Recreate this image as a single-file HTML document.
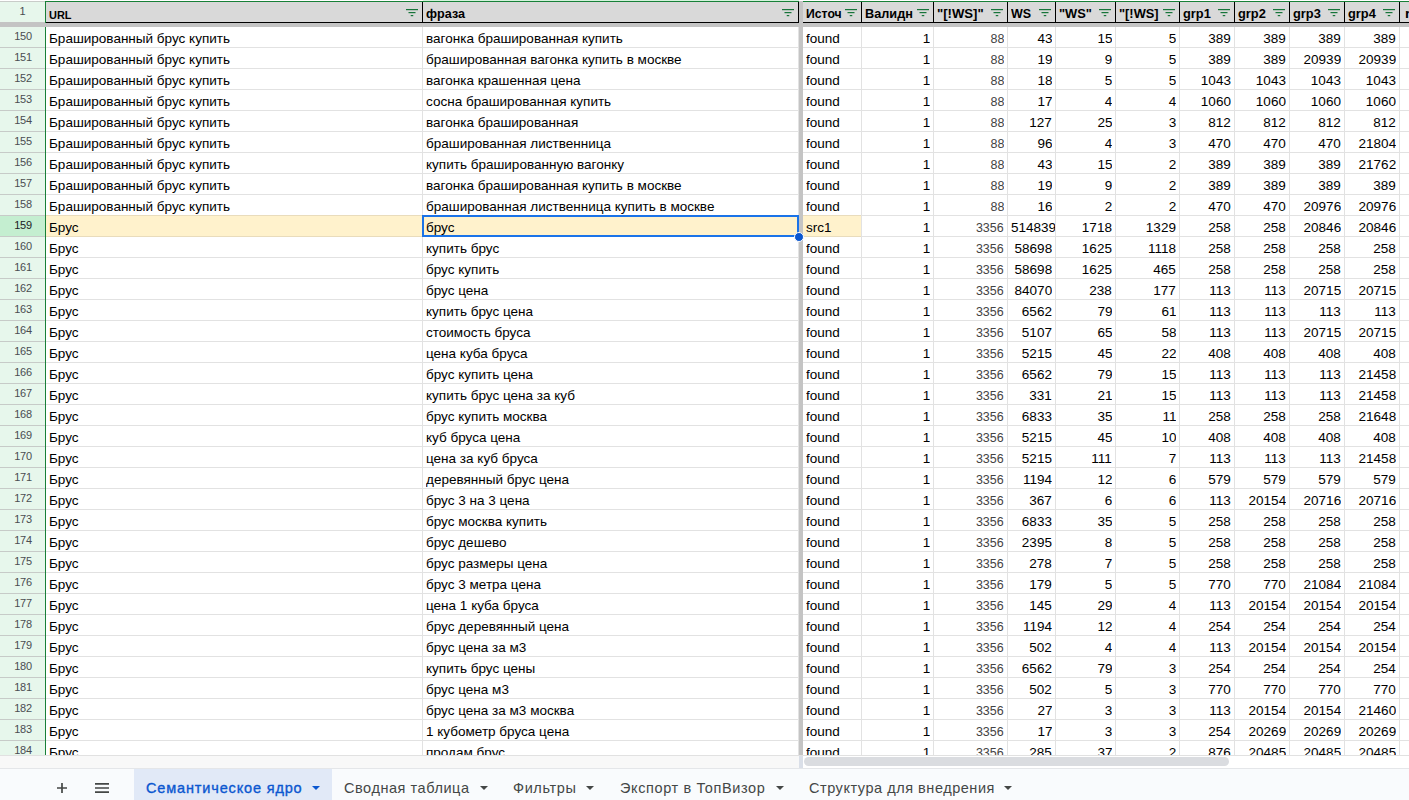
<!DOCTYPE html>
<html lang="ru"><head><meta charset="utf-8"><title>Семантическое ядро</title>
<style>
html,body{margin:0;padding:0;background:#fff;}
body{width:1409px;height:800px;overflow:hidden;position:relative;font-family:"Liberation Sans",sans-serif;}
.a{position:absolute;}
#grid{position:absolute;left:0;top:0;width:1409px;height:755px;overflow:hidden;background:#fff;}
.rh{position:absolute;left:0;width:45px;height:20px;background:#e7f7ec;border-bottom:1px solid #c7cbc8;color:#4a4d51;font-size:11px;line-height:19px;text-align:center;letter-spacing:-0.35px;box-sizing:border-box;padding-left:1px;height:21px;}
.rh.sel{background:#c4eed0;color:#202124;}
.c{position:absolute;height:20px;line-height:21px;font-size:13.0px;color:#000;white-space:nowrap;overflow:hidden;}
.c span{display:inline-block;transform:scaleX(1.04);transform-origin:0 50%;position:relative;top:1px;}
.c.r{text-align:right;}
.c.r span{transform-origin:100% 50%;}
.c.g{color:#434343;font-size:12px;}
.c.g span{top:1.5px;}
.hl{position:absolute;background:#fff2cc;}
.vl{position:absolute;width:1px;background:#e2e2e2;}
.hline{position:absolute;height:1px;background:#e2e2e2;}
.hd{position:absolute;top:2px;height:20px;background:#d9d9d9;font-weight:bold;font-size:12.5px;line-height:25px;color:#000;white-space:nowrap;overflow:hidden;}
.hd span{display:inline-block;transform-origin:0 50%;margin-left:3px;}
.fi{position:absolute;top:9px;width:12px;height:8px;}
.tab{position:absolute;top:769px;height:31px;font-size:14.5px;line-height:38px;color:#444746;white-space:nowrap;}
.car{position:absolute;width:0;height:0;border-left:4px solid transparent;border-right:4px solid transparent;border-top:4px solid #444746;top:786px;}
</style></head><body>
<div id="grid">

<div class="a" style="left:0;top:1px;width:45px;height:1px;background:#c9ccc9"></div>
<div class="a" style="left:0;top:2px;width:45px;height:21px;background:#e7f7ec;color:#4a4d51;font-size:11px;line-height:19px;text-align:center">1</div>
<div class="a" style="left:423px;top:0;width:376px;height:1px;background:#d3f3dc"></div>
<div class="a" style="left:45px;top:1px;width:1364px;height:1px;background:#188038"></div>
<div class="a" style="left:0;top:22px;width:1409px;height:5px;background:#c4c4c4"></div>
<div class="hd" style="left:46px;width:376px"><span id="h0" style="transform:scaleX(0.952);font-size:11.5px;position:relative;top:0.6px">URL</span></div>
<div class="a" style="left:422px;top:2px;width:1px;height:20px;background:#000"></div>
<svg class="fi" style="left:406px" viewBox="0 0 12 8"><rect x="0" y="0" width="12" height="1.2" fill="#17753a"/><rect x="2.5" y="3" width="7" height="1.2" fill="#17753a"/><rect x="4.75" y="6" width="2.5" height="1.2" fill="#17753a"/></svg>
<div class="hd" style="left:423px;width:375px"><span id="h1" style="transform:scaleX(1.008)">фраза</span></div>
<div class="a" style="left:798px;top:2px;width:1px;height:20px;background:#000"></div>
<svg class="fi" style="left:782px" viewBox="0 0 12 8"><rect x="0" y="0" width="12" height="1.2" fill="#17753a"/><rect x="2.5" y="3" width="7" height="1.2" fill="#17753a"/><rect x="4.75" y="6" width="2.5" height="1.2" fill="#17753a"/></svg>
<div class="hd" style="left:803px;width:58px"><span id="h2" style="transform:scaleX(0.979)">Источ</span></div>
<div class="a" style="left:861px;top:2px;width:1px;height:20px;background:#000"></div>
<svg class="fi" style="left:845px" viewBox="0 0 12 8"><rect x="0" y="0" width="12" height="1.2" fill="#17753a"/><rect x="2.5" y="3" width="7" height="1.2" fill="#17753a"/><rect x="4.75" y="6" width="2.5" height="1.2" fill="#17753a"/></svg>
<div class="hd" style="left:862px;width:71px"><span id="h3" style="transform:scaleX(1.017)">Валидн</span></div>
<div class="a" style="left:933px;top:2px;width:1px;height:20px;background:#000"></div>
<svg class="fi" style="left:917px" viewBox="0 0 12 8"><rect x="0" y="0" width="12" height="1.2" fill="#17753a"/><rect x="2.5" y="3" width="7" height="1.2" fill="#17753a"/><rect x="4.75" y="6" width="2.5" height="1.2" fill="#17753a"/></svg>
<div class="hd" style="left:934px;width:73px"><span id="h4" style="transform:scaleX(1.050)">&quot;[!WS]&quot;</span></div>
<div class="a" style="left:1007px;top:2px;width:1px;height:20px;background:#000"></div>
<svg class="fi" style="left:991px" viewBox="0 0 12 8"><rect x="0" y="0" width="12" height="1.2" fill="#17753a"/><rect x="2.5" y="3" width="7" height="1.2" fill="#17753a"/><rect x="4.75" y="6" width="2.5" height="1.2" fill="#17753a"/></svg>
<div class="hd" style="left:1008px;width:47px"><span id="h5" style="transform:scaleX(0.998)">WS</span></div>
<div class="a" style="left:1055px;top:2px;width:1px;height:20px;background:#000"></div>
<svg class="fi" style="left:1039px" viewBox="0 0 12 8"><rect x="0" y="0" width="12" height="1.2" fill="#17753a"/><rect x="2.5" y="3" width="7" height="1.2" fill="#17753a"/><rect x="4.75" y="6" width="2.5" height="1.2" fill="#17753a"/></svg>
<div class="hd" style="left:1056px;width:59px"><span id="h6" style="transform:scaleX(1.028)">&quot;WS&quot;</span></div>
<div class="a" style="left:1115px;top:2px;width:1px;height:20px;background:#000"></div>
<svg class="fi" style="left:1099px" viewBox="0 0 12 8"><rect x="0" y="0" width="12" height="1.2" fill="#17753a"/><rect x="2.5" y="3" width="7" height="1.2" fill="#17753a"/><rect x="4.75" y="6" width="2.5" height="1.2" fill="#17753a"/></svg>
<div class="hd" style="left:1116px;width:63px"><span id="h7" style="transform:scaleX(1.027)">&quot;[!WS]</span></div>
<div class="a" style="left:1179px;top:2px;width:1px;height:20px;background:#000"></div>
<svg class="fi" style="left:1163px" viewBox="0 0 12 8"><rect x="0" y="0" width="12" height="1.2" fill="#17753a"/><rect x="2.5" y="3" width="7" height="1.2" fill="#17753a"/><rect x="4.75" y="6" width="2.5" height="1.2" fill="#17753a"/></svg>
<div class="hd" style="left:1180px;width:54px"><span id="h8" style="transform:scaleX(1.026)">grp1</span></div>
<div class="a" style="left:1234px;top:2px;width:1px;height:20px;background:#000"></div>
<svg class="fi" style="left:1218px" viewBox="0 0 12 8"><rect x="0" y="0" width="12" height="1.2" fill="#17753a"/><rect x="2.5" y="3" width="7" height="1.2" fill="#17753a"/><rect x="4.75" y="6" width="2.5" height="1.2" fill="#17753a"/></svg>
<div class="hd" style="left:1235px;width:54px"><span id="h9" style="transform:scaleX(1.026)">grp2</span></div>
<div class="a" style="left:1289px;top:2px;width:1px;height:20px;background:#000"></div>
<svg class="fi" style="left:1273px" viewBox="0 0 12 8"><rect x="0" y="0" width="12" height="1.2" fill="#17753a"/><rect x="2.5" y="3" width="7" height="1.2" fill="#17753a"/><rect x="4.75" y="6" width="2.5" height="1.2" fill="#17753a"/></svg>
<div class="hd" style="left:1290px;width:54px"><span id="h10" style="transform:scaleX(1.026)">grp3</span></div>
<div class="a" style="left:1344px;top:2px;width:1px;height:20px;background:#000"></div>
<svg class="fi" style="left:1328px" viewBox="0 0 12 8"><rect x="0" y="0" width="12" height="1.2" fill="#17753a"/><rect x="2.5" y="3" width="7" height="1.2" fill="#17753a"/><rect x="4.75" y="6" width="2.5" height="1.2" fill="#17753a"/></svg>
<div class="hd" style="left:1345px;width:54px"><span id="h11" style="transform:scaleX(1.026)">grp4</span></div>
<div class="a" style="left:1399px;top:2px;width:1px;height:20px;background:#000"></div>
<svg class="fi" style="left:1383px" viewBox="0 0 12 8"><rect x="0" y="0" width="12" height="1.2" fill="#17753a"/><rect x="2.5" y="3" width="7" height="1.2" fill="#17753a"/><rect x="4.75" y="6" width="2.5" height="1.2" fill="#17753a"/></svg>
<div class="hd" style="left:1400px;width:60px"><span id="h12" style="transform:scaleX(1.128);margin-left:4.5px">r</span></div>
<div class="a" style="left:1460px;top:2px;width:1px;height:20px;background:#000"></div>
<div class="a" style="left:46px;top:22px;width:1363px;height:1px;background:#000"></div>
<div class="hl" style="left:46px;top:215px;width:816px;height:22px;background:#e9dcbc"></div>
<div class="hl" style="left:46px;top:216px;width:815px;height:20px"></div>
<div class="hline" style="left:46px;top:47px;width:1363px"></div>
<div class="hline" style="left:46px;top:68px;width:1363px"></div>
<div class="hline" style="left:46px;top:89px;width:1363px"></div>
<div class="hline" style="left:46px;top:110px;width:1363px"></div>
<div class="hline" style="left:46px;top:131px;width:1363px"></div>
<div class="hline" style="left:46px;top:152px;width:1363px"></div>
<div class="hline" style="left:46px;top:173px;width:1363px"></div>
<div class="hline" style="left:46px;top:194px;width:1363px"></div>
<div class="hline" style="left:862px;top:215px;width:547px"></div>
<div class="hline" style="left:862px;top:236px;width:547px"></div>
<div class="hline" style="left:46px;top:257px;width:1363px"></div>
<div class="hline" style="left:46px;top:278px;width:1363px"></div>
<div class="hline" style="left:46px;top:299px;width:1363px"></div>
<div class="hline" style="left:46px;top:320px;width:1363px"></div>
<div class="hline" style="left:46px;top:341px;width:1363px"></div>
<div class="hline" style="left:46px;top:362px;width:1363px"></div>
<div class="hline" style="left:46px;top:383px;width:1363px"></div>
<div class="hline" style="left:46px;top:404px;width:1363px"></div>
<div class="hline" style="left:46px;top:425px;width:1363px"></div>
<div class="hline" style="left:46px;top:446px;width:1363px"></div>
<div class="hline" style="left:46px;top:467px;width:1363px"></div>
<div class="hline" style="left:46px;top:488px;width:1363px"></div>
<div class="hline" style="left:46px;top:509px;width:1363px"></div>
<div class="hline" style="left:46px;top:530px;width:1363px"></div>
<div class="hline" style="left:46px;top:551px;width:1363px"></div>
<div class="hline" style="left:46px;top:572px;width:1363px"></div>
<div class="hline" style="left:46px;top:593px;width:1363px"></div>
<div class="hline" style="left:46px;top:614px;width:1363px"></div>
<div class="hline" style="left:46px;top:635px;width:1363px"></div>
<div class="hline" style="left:46px;top:656px;width:1363px"></div>
<div class="hline" style="left:46px;top:677px;width:1363px"></div>
<div class="hline" style="left:46px;top:698px;width:1363px"></div>
<div class="hline" style="left:46px;top:719px;width:1363px"></div>
<div class="hline" style="left:46px;top:740px;width:1363px"></div>
<div class="hline" style="left:46px;top:761px;width:1363px"></div>
<div class="vl" style="left:422px;top:27px;height:728px"></div>
<div class="vl" style="left:798px;top:27px;height:728px"></div>
<div class="vl" style="left:861px;top:27px;height:728px"></div>
<div class="vl" style="left:933px;top:27px;height:728px"></div>
<div class="vl" style="left:1007px;top:27px;height:728px"></div>
<div class="vl" style="left:1055px;top:27px;height:728px"></div>
<div class="vl" style="left:1115px;top:27px;height:728px"></div>
<div class="vl" style="left:1179px;top:27px;height:728px"></div>
<div class="vl" style="left:1234px;top:27px;height:728px"></div>
<div class="vl" style="left:1289px;top:27px;height:728px"></div>
<div class="vl" style="left:1344px;top:27px;height:728px"></div>
<div class="vl" style="left:1399px;top:27px;height:728px"></div>
<div class="rh" style="top:27px">150</div>
<div class="c" style="left:49px;top:27px;width:373px"><span>Брашированный брус купить</span></div>
<div class="c" style="left:426px;top:27px;width:372px"><span>вагонка брашированная купить</span></div>
<div class="c" style="left:806px;top:27px;width:55px"><span>found</span></div>
<div class="c r" style="left:862px;top:27px;width:68px"><span>1</span></div>
<div class="c r g" style="left:934px;top:27px;width:70px"><span>88</span></div>
<div class="c r" style="left:1008px;top:27px;width:44px"><span>43</span></div>
<div class="c r" style="left:1056px;top:27px;width:56px"><span>15</span></div>
<div class="c r" style="left:1116px;top:27px;width:60px"><span>5</span></div>
<div class="c r" style="left:1180px;top:27px;width:51px"><span>389</span></div>
<div class="c r" style="left:1235px;top:27px;width:51px"><span>389</span></div>
<div class="c r" style="left:1290px;top:27px;width:51px"><span>389</span></div>
<div class="c r" style="left:1345px;top:27px;width:51px"><span>389</span></div>
<div class="rh" style="top:48px">151</div>
<div class="c" style="left:49px;top:48px;width:373px"><span>Брашированный брус купить</span></div>
<div class="c" style="left:426px;top:48px;width:372px"><span>брашированная вагонка купить в москве</span></div>
<div class="c" style="left:806px;top:48px;width:55px"><span>found</span></div>
<div class="c r" style="left:862px;top:48px;width:68px"><span>1</span></div>
<div class="c r g" style="left:934px;top:48px;width:70px"><span>88</span></div>
<div class="c r" style="left:1008px;top:48px;width:44px"><span>19</span></div>
<div class="c r" style="left:1056px;top:48px;width:56px"><span>9</span></div>
<div class="c r" style="left:1116px;top:48px;width:60px"><span>5</span></div>
<div class="c r" style="left:1180px;top:48px;width:51px"><span>389</span></div>
<div class="c r" style="left:1235px;top:48px;width:51px"><span>389</span></div>
<div class="c r" style="left:1290px;top:48px;width:51px"><span>20939</span></div>
<div class="c r" style="left:1345px;top:48px;width:51px"><span>20939</span></div>
<div class="rh" style="top:69px">152</div>
<div class="c" style="left:49px;top:69px;width:373px"><span>Брашированный брус купить</span></div>
<div class="c" style="left:426px;top:69px;width:372px"><span>вагонка крашенная цена</span></div>
<div class="c" style="left:806px;top:69px;width:55px"><span>found</span></div>
<div class="c r" style="left:862px;top:69px;width:68px"><span>1</span></div>
<div class="c r g" style="left:934px;top:69px;width:70px"><span>88</span></div>
<div class="c r" style="left:1008px;top:69px;width:44px"><span>18</span></div>
<div class="c r" style="left:1056px;top:69px;width:56px"><span>5</span></div>
<div class="c r" style="left:1116px;top:69px;width:60px"><span>5</span></div>
<div class="c r" style="left:1180px;top:69px;width:51px"><span>1043</span></div>
<div class="c r" style="left:1235px;top:69px;width:51px"><span>1043</span></div>
<div class="c r" style="left:1290px;top:69px;width:51px"><span>1043</span></div>
<div class="c r" style="left:1345px;top:69px;width:51px"><span>1043</span></div>
<div class="rh" style="top:90px">153</div>
<div class="c" style="left:49px;top:90px;width:373px"><span>Брашированный брус купить</span></div>
<div class="c" style="left:426px;top:90px;width:372px"><span>сосна брашированная купить</span></div>
<div class="c" style="left:806px;top:90px;width:55px"><span>found</span></div>
<div class="c r" style="left:862px;top:90px;width:68px"><span>1</span></div>
<div class="c r g" style="left:934px;top:90px;width:70px"><span>88</span></div>
<div class="c r" style="left:1008px;top:90px;width:44px"><span>17</span></div>
<div class="c r" style="left:1056px;top:90px;width:56px"><span>4</span></div>
<div class="c r" style="left:1116px;top:90px;width:60px"><span>4</span></div>
<div class="c r" style="left:1180px;top:90px;width:51px"><span>1060</span></div>
<div class="c r" style="left:1235px;top:90px;width:51px"><span>1060</span></div>
<div class="c r" style="left:1290px;top:90px;width:51px"><span>1060</span></div>
<div class="c r" style="left:1345px;top:90px;width:51px"><span>1060</span></div>
<div class="rh" style="top:111px">154</div>
<div class="c" style="left:49px;top:111px;width:373px"><span>Брашированный брус купить</span></div>
<div class="c" style="left:426px;top:111px;width:372px"><span>вагонка брашированная</span></div>
<div class="c" style="left:806px;top:111px;width:55px"><span>found</span></div>
<div class="c r" style="left:862px;top:111px;width:68px"><span>1</span></div>
<div class="c r g" style="left:934px;top:111px;width:70px"><span>88</span></div>
<div class="c r" style="left:1008px;top:111px;width:44px"><span>127</span></div>
<div class="c r" style="left:1056px;top:111px;width:56px"><span>25</span></div>
<div class="c r" style="left:1116px;top:111px;width:60px"><span>3</span></div>
<div class="c r" style="left:1180px;top:111px;width:51px"><span>812</span></div>
<div class="c r" style="left:1235px;top:111px;width:51px"><span>812</span></div>
<div class="c r" style="left:1290px;top:111px;width:51px"><span>812</span></div>
<div class="c r" style="left:1345px;top:111px;width:51px"><span>812</span></div>
<div class="rh" style="top:132px">155</div>
<div class="c" style="left:49px;top:132px;width:373px"><span>Брашированный брус купить</span></div>
<div class="c" style="left:426px;top:132px;width:372px"><span>брашированная лиственница</span></div>
<div class="c" style="left:806px;top:132px;width:55px"><span>found</span></div>
<div class="c r" style="left:862px;top:132px;width:68px"><span>1</span></div>
<div class="c r g" style="left:934px;top:132px;width:70px"><span>88</span></div>
<div class="c r" style="left:1008px;top:132px;width:44px"><span>96</span></div>
<div class="c r" style="left:1056px;top:132px;width:56px"><span>4</span></div>
<div class="c r" style="left:1116px;top:132px;width:60px"><span>3</span></div>
<div class="c r" style="left:1180px;top:132px;width:51px"><span>470</span></div>
<div class="c r" style="left:1235px;top:132px;width:51px"><span>470</span></div>
<div class="c r" style="left:1290px;top:132px;width:51px"><span>470</span></div>
<div class="c r" style="left:1345px;top:132px;width:51px"><span>21804</span></div>
<div class="rh" style="top:153px">156</div>
<div class="c" style="left:49px;top:153px;width:373px"><span>Брашированный брус купить</span></div>
<div class="c" style="left:426px;top:153px;width:372px"><span>купить брашированную вагонку</span></div>
<div class="c" style="left:806px;top:153px;width:55px"><span>found</span></div>
<div class="c r" style="left:862px;top:153px;width:68px"><span>1</span></div>
<div class="c r g" style="left:934px;top:153px;width:70px"><span>88</span></div>
<div class="c r" style="left:1008px;top:153px;width:44px"><span>43</span></div>
<div class="c r" style="left:1056px;top:153px;width:56px"><span>15</span></div>
<div class="c r" style="left:1116px;top:153px;width:60px"><span>2</span></div>
<div class="c r" style="left:1180px;top:153px;width:51px"><span>389</span></div>
<div class="c r" style="left:1235px;top:153px;width:51px"><span>389</span></div>
<div class="c r" style="left:1290px;top:153px;width:51px"><span>389</span></div>
<div class="c r" style="left:1345px;top:153px;width:51px"><span>21762</span></div>
<div class="rh" style="top:174px">157</div>
<div class="c" style="left:49px;top:174px;width:373px"><span>Брашированный брус купить</span></div>
<div class="c" style="left:426px;top:174px;width:372px"><span>вагонка брашированная купить в москве</span></div>
<div class="c" style="left:806px;top:174px;width:55px"><span>found</span></div>
<div class="c r" style="left:862px;top:174px;width:68px"><span>1</span></div>
<div class="c r g" style="left:934px;top:174px;width:70px"><span>88</span></div>
<div class="c r" style="left:1008px;top:174px;width:44px"><span>19</span></div>
<div class="c r" style="left:1056px;top:174px;width:56px"><span>9</span></div>
<div class="c r" style="left:1116px;top:174px;width:60px"><span>2</span></div>
<div class="c r" style="left:1180px;top:174px;width:51px"><span>389</span></div>
<div class="c r" style="left:1235px;top:174px;width:51px"><span>389</span></div>
<div class="c r" style="left:1290px;top:174px;width:51px"><span>389</span></div>
<div class="c r" style="left:1345px;top:174px;width:51px"><span>389</span></div>
<div class="rh" style="top:195px">158</div>
<div class="c" style="left:49px;top:195px;width:373px"><span>Брашированный брус купить</span></div>
<div class="c" style="left:426px;top:195px;width:372px"><span>брашированная лиственница купить в москве</span></div>
<div class="c" style="left:806px;top:195px;width:55px"><span>found</span></div>
<div class="c r" style="left:862px;top:195px;width:68px"><span>1</span></div>
<div class="c r g" style="left:934px;top:195px;width:70px"><span>88</span></div>
<div class="c r" style="left:1008px;top:195px;width:44px"><span>16</span></div>
<div class="c r" style="left:1056px;top:195px;width:56px"><span>2</span></div>
<div class="c r" style="left:1116px;top:195px;width:60px"><span>2</span></div>
<div class="c r" style="left:1180px;top:195px;width:51px"><span>470</span></div>
<div class="c r" style="left:1235px;top:195px;width:51px"><span>470</span></div>
<div class="c r" style="left:1290px;top:195px;width:51px"><span>20976</span></div>
<div class="c r" style="left:1345px;top:195px;width:51px"><span>20976</span></div>
<div class="rh sel" style="top:216px">159</div>
<div class="c" style="left:49px;top:216px;width:373px"><span>Брус</span></div>
<div class="c" style="left:426px;top:216px;width:372px"><span>брус</span></div>
<div class="c" style="left:806px;top:216px;width:55px"><span>src1</span></div>
<div class="c r" style="left:862px;top:216px;width:68px"><span>1</span></div>
<div class="c r g" style="left:934px;top:216px;width:70px"><span>3356</span></div>
<div class="c" style="left:1011px;top:216px;width:44px"><span>514839</span></div>
<div class="c r" style="left:1056px;top:216px;width:56px"><span>1718</span></div>
<div class="c r" style="left:1116px;top:216px;width:60px"><span>1329</span></div>
<div class="c r" style="left:1180px;top:216px;width:51px"><span>258</span></div>
<div class="c r" style="left:1235px;top:216px;width:51px"><span>258</span></div>
<div class="c r" style="left:1290px;top:216px;width:51px"><span>20846</span></div>
<div class="c r" style="left:1345px;top:216px;width:51px"><span>20846</span></div>
<div class="rh" style="top:237px">160</div>
<div class="c" style="left:49px;top:237px;width:373px"><span>Брус</span></div>
<div class="c" style="left:426px;top:237px;width:372px"><span>купить брус</span></div>
<div class="c" style="left:806px;top:237px;width:55px"><span>found</span></div>
<div class="c r" style="left:862px;top:237px;width:68px"><span>1</span></div>
<div class="c r g" style="left:934px;top:237px;width:70px"><span>3356</span></div>
<div class="c r" style="left:1008px;top:237px;width:44px"><span>58698</span></div>
<div class="c r" style="left:1056px;top:237px;width:56px"><span>1625</span></div>
<div class="c r" style="left:1116px;top:237px;width:60px"><span>1118</span></div>
<div class="c r" style="left:1180px;top:237px;width:51px"><span>258</span></div>
<div class="c r" style="left:1235px;top:237px;width:51px"><span>258</span></div>
<div class="c r" style="left:1290px;top:237px;width:51px"><span>258</span></div>
<div class="c r" style="left:1345px;top:237px;width:51px"><span>258</span></div>
<div class="rh" style="top:258px">161</div>
<div class="c" style="left:49px;top:258px;width:373px"><span>Брус</span></div>
<div class="c" style="left:426px;top:258px;width:372px"><span>брус купить</span></div>
<div class="c" style="left:806px;top:258px;width:55px"><span>found</span></div>
<div class="c r" style="left:862px;top:258px;width:68px"><span>1</span></div>
<div class="c r g" style="left:934px;top:258px;width:70px"><span>3356</span></div>
<div class="c r" style="left:1008px;top:258px;width:44px"><span>58698</span></div>
<div class="c r" style="left:1056px;top:258px;width:56px"><span>1625</span></div>
<div class="c r" style="left:1116px;top:258px;width:60px"><span>465</span></div>
<div class="c r" style="left:1180px;top:258px;width:51px"><span>258</span></div>
<div class="c r" style="left:1235px;top:258px;width:51px"><span>258</span></div>
<div class="c r" style="left:1290px;top:258px;width:51px"><span>258</span></div>
<div class="c r" style="left:1345px;top:258px;width:51px"><span>258</span></div>
<div class="rh" style="top:279px">162</div>
<div class="c" style="left:49px;top:279px;width:373px"><span>Брус</span></div>
<div class="c" style="left:426px;top:279px;width:372px"><span>брус цена</span></div>
<div class="c" style="left:806px;top:279px;width:55px"><span>found</span></div>
<div class="c r" style="left:862px;top:279px;width:68px"><span>1</span></div>
<div class="c r g" style="left:934px;top:279px;width:70px"><span>3356</span></div>
<div class="c r" style="left:1008px;top:279px;width:44px"><span>84070</span></div>
<div class="c r" style="left:1056px;top:279px;width:56px"><span>238</span></div>
<div class="c r" style="left:1116px;top:279px;width:60px"><span>177</span></div>
<div class="c r" style="left:1180px;top:279px;width:51px"><span>113</span></div>
<div class="c r" style="left:1235px;top:279px;width:51px"><span>113</span></div>
<div class="c r" style="left:1290px;top:279px;width:51px"><span>20715</span></div>
<div class="c r" style="left:1345px;top:279px;width:51px"><span>20715</span></div>
<div class="rh" style="top:300px">163</div>
<div class="c" style="left:49px;top:300px;width:373px"><span>Брус</span></div>
<div class="c" style="left:426px;top:300px;width:372px"><span>купить брус цена</span></div>
<div class="c" style="left:806px;top:300px;width:55px"><span>found</span></div>
<div class="c r" style="left:862px;top:300px;width:68px"><span>1</span></div>
<div class="c r g" style="left:934px;top:300px;width:70px"><span>3356</span></div>
<div class="c r" style="left:1008px;top:300px;width:44px"><span>6562</span></div>
<div class="c r" style="left:1056px;top:300px;width:56px"><span>79</span></div>
<div class="c r" style="left:1116px;top:300px;width:60px"><span>61</span></div>
<div class="c r" style="left:1180px;top:300px;width:51px"><span>113</span></div>
<div class="c r" style="left:1235px;top:300px;width:51px"><span>113</span></div>
<div class="c r" style="left:1290px;top:300px;width:51px"><span>113</span></div>
<div class="c r" style="left:1345px;top:300px;width:51px"><span>113</span></div>
<div class="rh" style="top:321px">164</div>
<div class="c" style="left:49px;top:321px;width:373px"><span>Брус</span></div>
<div class="c" style="left:426px;top:321px;width:372px"><span>стоимость бруса</span></div>
<div class="c" style="left:806px;top:321px;width:55px"><span>found</span></div>
<div class="c r" style="left:862px;top:321px;width:68px"><span>1</span></div>
<div class="c r g" style="left:934px;top:321px;width:70px"><span>3356</span></div>
<div class="c r" style="left:1008px;top:321px;width:44px"><span>5107</span></div>
<div class="c r" style="left:1056px;top:321px;width:56px"><span>65</span></div>
<div class="c r" style="left:1116px;top:321px;width:60px"><span>58</span></div>
<div class="c r" style="left:1180px;top:321px;width:51px"><span>113</span></div>
<div class="c r" style="left:1235px;top:321px;width:51px"><span>113</span></div>
<div class="c r" style="left:1290px;top:321px;width:51px"><span>20715</span></div>
<div class="c r" style="left:1345px;top:321px;width:51px"><span>20715</span></div>
<div class="rh" style="top:342px">165</div>
<div class="c" style="left:49px;top:342px;width:373px"><span>Брус</span></div>
<div class="c" style="left:426px;top:342px;width:372px"><span>цена куба бруса</span></div>
<div class="c" style="left:806px;top:342px;width:55px"><span>found</span></div>
<div class="c r" style="left:862px;top:342px;width:68px"><span>1</span></div>
<div class="c r g" style="left:934px;top:342px;width:70px"><span>3356</span></div>
<div class="c r" style="left:1008px;top:342px;width:44px"><span>5215</span></div>
<div class="c r" style="left:1056px;top:342px;width:56px"><span>45</span></div>
<div class="c r" style="left:1116px;top:342px;width:60px"><span>22</span></div>
<div class="c r" style="left:1180px;top:342px;width:51px"><span>408</span></div>
<div class="c r" style="left:1235px;top:342px;width:51px"><span>408</span></div>
<div class="c r" style="left:1290px;top:342px;width:51px"><span>408</span></div>
<div class="c r" style="left:1345px;top:342px;width:51px"><span>408</span></div>
<div class="rh" style="top:363px">166</div>
<div class="c" style="left:49px;top:363px;width:373px"><span>Брус</span></div>
<div class="c" style="left:426px;top:363px;width:372px"><span>брус купить цена</span></div>
<div class="c" style="left:806px;top:363px;width:55px"><span>found</span></div>
<div class="c r" style="left:862px;top:363px;width:68px"><span>1</span></div>
<div class="c r g" style="left:934px;top:363px;width:70px"><span>3356</span></div>
<div class="c r" style="left:1008px;top:363px;width:44px"><span>6562</span></div>
<div class="c r" style="left:1056px;top:363px;width:56px"><span>79</span></div>
<div class="c r" style="left:1116px;top:363px;width:60px"><span>15</span></div>
<div class="c r" style="left:1180px;top:363px;width:51px"><span>113</span></div>
<div class="c r" style="left:1235px;top:363px;width:51px"><span>113</span></div>
<div class="c r" style="left:1290px;top:363px;width:51px"><span>113</span></div>
<div class="c r" style="left:1345px;top:363px;width:51px"><span>21458</span></div>
<div class="rh" style="top:384px">167</div>
<div class="c" style="left:49px;top:384px;width:373px"><span>Брус</span></div>
<div class="c" style="left:426px;top:384px;width:372px"><span>купить брус цена за куб</span></div>
<div class="c" style="left:806px;top:384px;width:55px"><span>found</span></div>
<div class="c r" style="left:862px;top:384px;width:68px"><span>1</span></div>
<div class="c r g" style="left:934px;top:384px;width:70px"><span>3356</span></div>
<div class="c r" style="left:1008px;top:384px;width:44px"><span>331</span></div>
<div class="c r" style="left:1056px;top:384px;width:56px"><span>21</span></div>
<div class="c r" style="left:1116px;top:384px;width:60px"><span>15</span></div>
<div class="c r" style="left:1180px;top:384px;width:51px"><span>113</span></div>
<div class="c r" style="left:1235px;top:384px;width:51px"><span>113</span></div>
<div class="c r" style="left:1290px;top:384px;width:51px"><span>113</span></div>
<div class="c r" style="left:1345px;top:384px;width:51px"><span>21458</span></div>
<div class="rh" style="top:405px">168</div>
<div class="c" style="left:49px;top:405px;width:373px"><span>Брус</span></div>
<div class="c" style="left:426px;top:405px;width:372px"><span>брус купить москва</span></div>
<div class="c" style="left:806px;top:405px;width:55px"><span>found</span></div>
<div class="c r" style="left:862px;top:405px;width:68px"><span>1</span></div>
<div class="c r g" style="left:934px;top:405px;width:70px"><span>3356</span></div>
<div class="c r" style="left:1008px;top:405px;width:44px"><span>6833</span></div>
<div class="c r" style="left:1056px;top:405px;width:56px"><span>35</span></div>
<div class="c r" style="left:1116px;top:405px;width:60px"><span>11</span></div>
<div class="c r" style="left:1180px;top:405px;width:51px"><span>258</span></div>
<div class="c r" style="left:1235px;top:405px;width:51px"><span>258</span></div>
<div class="c r" style="left:1290px;top:405px;width:51px"><span>258</span></div>
<div class="c r" style="left:1345px;top:405px;width:51px"><span>21648</span></div>
<div class="rh" style="top:426px">169</div>
<div class="c" style="left:49px;top:426px;width:373px"><span>Брус</span></div>
<div class="c" style="left:426px;top:426px;width:372px"><span>куб бруса цена</span></div>
<div class="c" style="left:806px;top:426px;width:55px"><span>found</span></div>
<div class="c r" style="left:862px;top:426px;width:68px"><span>1</span></div>
<div class="c r g" style="left:934px;top:426px;width:70px"><span>3356</span></div>
<div class="c r" style="left:1008px;top:426px;width:44px"><span>5215</span></div>
<div class="c r" style="left:1056px;top:426px;width:56px"><span>45</span></div>
<div class="c r" style="left:1116px;top:426px;width:60px"><span>10</span></div>
<div class="c r" style="left:1180px;top:426px;width:51px"><span>408</span></div>
<div class="c r" style="left:1235px;top:426px;width:51px"><span>408</span></div>
<div class="c r" style="left:1290px;top:426px;width:51px"><span>408</span></div>
<div class="c r" style="left:1345px;top:426px;width:51px"><span>408</span></div>
<div class="rh" style="top:447px">170</div>
<div class="c" style="left:49px;top:447px;width:373px"><span>Брус</span></div>
<div class="c" style="left:426px;top:447px;width:372px"><span>цена за куб бруса</span></div>
<div class="c" style="left:806px;top:447px;width:55px"><span>found</span></div>
<div class="c r" style="left:862px;top:447px;width:68px"><span>1</span></div>
<div class="c r g" style="left:934px;top:447px;width:70px"><span>3356</span></div>
<div class="c r" style="left:1008px;top:447px;width:44px"><span>5215</span></div>
<div class="c r" style="left:1056px;top:447px;width:56px"><span>111</span></div>
<div class="c r" style="left:1116px;top:447px;width:60px"><span>7</span></div>
<div class="c r" style="left:1180px;top:447px;width:51px"><span>113</span></div>
<div class="c r" style="left:1235px;top:447px;width:51px"><span>113</span></div>
<div class="c r" style="left:1290px;top:447px;width:51px"><span>113</span></div>
<div class="c r" style="left:1345px;top:447px;width:51px"><span>21458</span></div>
<div class="rh" style="top:468px">171</div>
<div class="c" style="left:49px;top:468px;width:373px"><span>Брус</span></div>
<div class="c" style="left:426px;top:468px;width:372px"><span>деревянный брус цена</span></div>
<div class="c" style="left:806px;top:468px;width:55px"><span>found</span></div>
<div class="c r" style="left:862px;top:468px;width:68px"><span>1</span></div>
<div class="c r g" style="left:934px;top:468px;width:70px"><span>3356</span></div>
<div class="c r" style="left:1008px;top:468px;width:44px"><span>1194</span></div>
<div class="c r" style="left:1056px;top:468px;width:56px"><span>12</span></div>
<div class="c r" style="left:1116px;top:468px;width:60px"><span>6</span></div>
<div class="c r" style="left:1180px;top:468px;width:51px"><span>579</span></div>
<div class="c r" style="left:1235px;top:468px;width:51px"><span>579</span></div>
<div class="c r" style="left:1290px;top:468px;width:51px"><span>579</span></div>
<div class="c r" style="left:1345px;top:468px;width:51px"><span>579</span></div>
<div class="rh" style="top:489px">172</div>
<div class="c" style="left:49px;top:489px;width:373px"><span>Брус</span></div>
<div class="c" style="left:426px;top:489px;width:372px"><span>брус 3 на 3 цена</span></div>
<div class="c" style="left:806px;top:489px;width:55px"><span>found</span></div>
<div class="c r" style="left:862px;top:489px;width:68px"><span>1</span></div>
<div class="c r g" style="left:934px;top:489px;width:70px"><span>3356</span></div>
<div class="c r" style="left:1008px;top:489px;width:44px"><span>367</span></div>
<div class="c r" style="left:1056px;top:489px;width:56px"><span>6</span></div>
<div class="c r" style="left:1116px;top:489px;width:60px"><span>6</span></div>
<div class="c r" style="left:1180px;top:489px;width:51px"><span>113</span></div>
<div class="c r" style="left:1235px;top:489px;width:51px"><span>20154</span></div>
<div class="c r" style="left:1290px;top:489px;width:51px"><span>20716</span></div>
<div class="c r" style="left:1345px;top:489px;width:51px"><span>20716</span></div>
<div class="rh" style="top:510px">173</div>
<div class="c" style="left:49px;top:510px;width:373px"><span>Брус</span></div>
<div class="c" style="left:426px;top:510px;width:372px"><span>брус москва купить</span></div>
<div class="c" style="left:806px;top:510px;width:55px"><span>found</span></div>
<div class="c r" style="left:862px;top:510px;width:68px"><span>1</span></div>
<div class="c r g" style="left:934px;top:510px;width:70px"><span>3356</span></div>
<div class="c r" style="left:1008px;top:510px;width:44px"><span>6833</span></div>
<div class="c r" style="left:1056px;top:510px;width:56px"><span>35</span></div>
<div class="c r" style="left:1116px;top:510px;width:60px"><span>5</span></div>
<div class="c r" style="left:1180px;top:510px;width:51px"><span>258</span></div>
<div class="c r" style="left:1235px;top:510px;width:51px"><span>258</span></div>
<div class="c r" style="left:1290px;top:510px;width:51px"><span>258</span></div>
<div class="c r" style="left:1345px;top:510px;width:51px"><span>258</span></div>
<div class="rh" style="top:531px">174</div>
<div class="c" style="left:49px;top:531px;width:373px"><span>Брус</span></div>
<div class="c" style="left:426px;top:531px;width:372px"><span>брус дешево</span></div>
<div class="c" style="left:806px;top:531px;width:55px"><span>found</span></div>
<div class="c r" style="left:862px;top:531px;width:68px"><span>1</span></div>
<div class="c r g" style="left:934px;top:531px;width:70px"><span>3356</span></div>
<div class="c r" style="left:1008px;top:531px;width:44px"><span>2395</span></div>
<div class="c r" style="left:1056px;top:531px;width:56px"><span>8</span></div>
<div class="c r" style="left:1116px;top:531px;width:60px"><span>5</span></div>
<div class="c r" style="left:1180px;top:531px;width:51px"><span>258</span></div>
<div class="c r" style="left:1235px;top:531px;width:51px"><span>258</span></div>
<div class="c r" style="left:1290px;top:531px;width:51px"><span>258</span></div>
<div class="c r" style="left:1345px;top:531px;width:51px"><span>258</span></div>
<div class="rh" style="top:552px">175</div>
<div class="c" style="left:49px;top:552px;width:373px"><span>Брус</span></div>
<div class="c" style="left:426px;top:552px;width:372px"><span>брус размеры цена</span></div>
<div class="c" style="left:806px;top:552px;width:55px"><span>found</span></div>
<div class="c r" style="left:862px;top:552px;width:68px"><span>1</span></div>
<div class="c r g" style="left:934px;top:552px;width:70px"><span>3356</span></div>
<div class="c r" style="left:1008px;top:552px;width:44px"><span>278</span></div>
<div class="c r" style="left:1056px;top:552px;width:56px"><span>7</span></div>
<div class="c r" style="left:1116px;top:552px;width:60px"><span>5</span></div>
<div class="c r" style="left:1180px;top:552px;width:51px"><span>258</span></div>
<div class="c r" style="left:1235px;top:552px;width:51px"><span>258</span></div>
<div class="c r" style="left:1290px;top:552px;width:51px"><span>258</span></div>
<div class="c r" style="left:1345px;top:552px;width:51px"><span>258</span></div>
<div class="rh" style="top:573px">176</div>
<div class="c" style="left:49px;top:573px;width:373px"><span>Брус</span></div>
<div class="c" style="left:426px;top:573px;width:372px"><span>брус 3 метра цена</span></div>
<div class="c" style="left:806px;top:573px;width:55px"><span>found</span></div>
<div class="c r" style="left:862px;top:573px;width:68px"><span>1</span></div>
<div class="c r g" style="left:934px;top:573px;width:70px"><span>3356</span></div>
<div class="c r" style="left:1008px;top:573px;width:44px"><span>179</span></div>
<div class="c r" style="left:1056px;top:573px;width:56px"><span>5</span></div>
<div class="c r" style="left:1116px;top:573px;width:60px"><span>5</span></div>
<div class="c r" style="left:1180px;top:573px;width:51px"><span>770</span></div>
<div class="c r" style="left:1235px;top:573px;width:51px"><span>770</span></div>
<div class="c r" style="left:1290px;top:573px;width:51px"><span>21084</span></div>
<div class="c r" style="left:1345px;top:573px;width:51px"><span>21084</span></div>
<div class="rh" style="top:594px">177</div>
<div class="c" style="left:49px;top:594px;width:373px"><span>Брус</span></div>
<div class="c" style="left:426px;top:594px;width:372px"><span>цена 1 куба бруса</span></div>
<div class="c" style="left:806px;top:594px;width:55px"><span>found</span></div>
<div class="c r" style="left:862px;top:594px;width:68px"><span>1</span></div>
<div class="c r g" style="left:934px;top:594px;width:70px"><span>3356</span></div>
<div class="c r" style="left:1008px;top:594px;width:44px"><span>145</span></div>
<div class="c r" style="left:1056px;top:594px;width:56px"><span>29</span></div>
<div class="c r" style="left:1116px;top:594px;width:60px"><span>4</span></div>
<div class="c r" style="left:1180px;top:594px;width:51px"><span>113</span></div>
<div class="c r" style="left:1235px;top:594px;width:51px"><span>20154</span></div>
<div class="c r" style="left:1290px;top:594px;width:51px"><span>20154</span></div>
<div class="c r" style="left:1345px;top:594px;width:51px"><span>20154</span></div>
<div class="rh" style="top:615px">178</div>
<div class="c" style="left:49px;top:615px;width:373px"><span>Брус</span></div>
<div class="c" style="left:426px;top:615px;width:372px"><span>брус деревянный цена</span></div>
<div class="c" style="left:806px;top:615px;width:55px"><span>found</span></div>
<div class="c r" style="left:862px;top:615px;width:68px"><span>1</span></div>
<div class="c r g" style="left:934px;top:615px;width:70px"><span>3356</span></div>
<div class="c r" style="left:1008px;top:615px;width:44px"><span>1194</span></div>
<div class="c r" style="left:1056px;top:615px;width:56px"><span>12</span></div>
<div class="c r" style="left:1116px;top:615px;width:60px"><span>4</span></div>
<div class="c r" style="left:1180px;top:615px;width:51px"><span>254</span></div>
<div class="c r" style="left:1235px;top:615px;width:51px"><span>254</span></div>
<div class="c r" style="left:1290px;top:615px;width:51px"><span>254</span></div>
<div class="c r" style="left:1345px;top:615px;width:51px"><span>254</span></div>
<div class="rh" style="top:636px">179</div>
<div class="c" style="left:49px;top:636px;width:373px"><span>Брус</span></div>
<div class="c" style="left:426px;top:636px;width:372px"><span>брус цена за м3</span></div>
<div class="c" style="left:806px;top:636px;width:55px"><span>found</span></div>
<div class="c r" style="left:862px;top:636px;width:68px"><span>1</span></div>
<div class="c r g" style="left:934px;top:636px;width:70px"><span>3356</span></div>
<div class="c r" style="left:1008px;top:636px;width:44px"><span>502</span></div>
<div class="c r" style="left:1056px;top:636px;width:56px"><span>4</span></div>
<div class="c r" style="left:1116px;top:636px;width:60px"><span>4</span></div>
<div class="c r" style="left:1180px;top:636px;width:51px"><span>113</span></div>
<div class="c r" style="left:1235px;top:636px;width:51px"><span>20154</span></div>
<div class="c r" style="left:1290px;top:636px;width:51px"><span>20154</span></div>
<div class="c r" style="left:1345px;top:636px;width:51px"><span>20154</span></div>
<div class="rh" style="top:657px">180</div>
<div class="c" style="left:49px;top:657px;width:373px"><span>Брус</span></div>
<div class="c" style="left:426px;top:657px;width:372px"><span>купить брус цены</span></div>
<div class="c" style="left:806px;top:657px;width:55px"><span>found</span></div>
<div class="c r" style="left:862px;top:657px;width:68px"><span>1</span></div>
<div class="c r g" style="left:934px;top:657px;width:70px"><span>3356</span></div>
<div class="c r" style="left:1008px;top:657px;width:44px"><span>6562</span></div>
<div class="c r" style="left:1056px;top:657px;width:56px"><span>79</span></div>
<div class="c r" style="left:1116px;top:657px;width:60px"><span>3</span></div>
<div class="c r" style="left:1180px;top:657px;width:51px"><span>254</span></div>
<div class="c r" style="left:1235px;top:657px;width:51px"><span>254</span></div>
<div class="c r" style="left:1290px;top:657px;width:51px"><span>254</span></div>
<div class="c r" style="left:1345px;top:657px;width:51px"><span>254</span></div>
<div class="rh" style="top:678px">181</div>
<div class="c" style="left:49px;top:678px;width:373px"><span>Брус</span></div>
<div class="c" style="left:426px;top:678px;width:372px"><span>брус цена м3</span></div>
<div class="c" style="left:806px;top:678px;width:55px"><span>found</span></div>
<div class="c r" style="left:862px;top:678px;width:68px"><span>1</span></div>
<div class="c r g" style="left:934px;top:678px;width:70px"><span>3356</span></div>
<div class="c r" style="left:1008px;top:678px;width:44px"><span>502</span></div>
<div class="c r" style="left:1056px;top:678px;width:56px"><span>5</span></div>
<div class="c r" style="left:1116px;top:678px;width:60px"><span>3</span></div>
<div class="c r" style="left:1180px;top:678px;width:51px"><span>770</span></div>
<div class="c r" style="left:1235px;top:678px;width:51px"><span>770</span></div>
<div class="c r" style="left:1290px;top:678px;width:51px"><span>770</span></div>
<div class="c r" style="left:1345px;top:678px;width:51px"><span>770</span></div>
<div class="rh" style="top:699px">182</div>
<div class="c" style="left:49px;top:699px;width:373px"><span>Брус</span></div>
<div class="c" style="left:426px;top:699px;width:372px"><span>брус цена за м3 москва</span></div>
<div class="c" style="left:806px;top:699px;width:55px"><span>found</span></div>
<div class="c r" style="left:862px;top:699px;width:68px"><span>1</span></div>
<div class="c r g" style="left:934px;top:699px;width:70px"><span>3356</span></div>
<div class="c r" style="left:1008px;top:699px;width:44px"><span>27</span></div>
<div class="c r" style="left:1056px;top:699px;width:56px"><span>3</span></div>
<div class="c r" style="left:1116px;top:699px;width:60px"><span>3</span></div>
<div class="c r" style="left:1180px;top:699px;width:51px"><span>113</span></div>
<div class="c r" style="left:1235px;top:699px;width:51px"><span>20154</span></div>
<div class="c r" style="left:1290px;top:699px;width:51px"><span>20154</span></div>
<div class="c r" style="left:1345px;top:699px;width:51px"><span>21460</span></div>
<div class="rh" style="top:720px">183</div>
<div class="c" style="left:49px;top:720px;width:373px"><span>Брус</span></div>
<div class="c" style="left:426px;top:720px;width:372px"><span>1 кубометр бруса цена</span></div>
<div class="c" style="left:806px;top:720px;width:55px"><span>found</span></div>
<div class="c r" style="left:862px;top:720px;width:68px"><span>1</span></div>
<div class="c r g" style="left:934px;top:720px;width:70px"><span>3356</span></div>
<div class="c r" style="left:1008px;top:720px;width:44px"><span>17</span></div>
<div class="c r" style="left:1056px;top:720px;width:56px"><span>3</span></div>
<div class="c r" style="left:1116px;top:720px;width:60px"><span>3</span></div>
<div class="c r" style="left:1180px;top:720px;width:51px"><span>254</span></div>
<div class="c r" style="left:1235px;top:720px;width:51px"><span>20269</span></div>
<div class="c r" style="left:1290px;top:720px;width:51px"><span>20269</span></div>
<div class="c r" style="left:1345px;top:720px;width:51px"><span>20269</span></div>
<div class="rh" style="top:741px">184</div>
<div class="c" style="left:49px;top:741px;width:373px"><span>Брус</span></div>
<div class="c" style="left:426px;top:741px;width:372px"><span>продам брус</span></div>
<div class="c" style="left:806px;top:741px;width:55px"><span>found</span></div>
<div class="c r" style="left:862px;top:741px;width:68px"><span>1</span></div>
<div class="c r g" style="left:934px;top:741px;width:70px"><span>3356</span></div>
<div class="c r" style="left:1008px;top:741px;width:44px"><span>285</span></div>
<div class="c r" style="left:1056px;top:741px;width:56px"><span>37</span></div>
<div class="c r" style="left:1116px;top:741px;width:60px"><span>2</span></div>
<div class="c r" style="left:1180px;top:741px;width:51px"><span>876</span></div>
<div class="c r" style="left:1235px;top:741px;width:51px"><span>20485</span></div>
<div class="c r" style="left:1290px;top:741px;width:51px"><span>20485</span></div>
<div class="c r" style="left:1345px;top:741px;width:51px"><span>20485</span></div>
<div class="a" style="left:799px;top:1px;width:4px;height:754px;background:#c4c4c4"></div>
<div class="a" style="left:45px;top:1px;width:1px;height:22px;background:#188038"></div>
<div class="a" style="left:45px;top:27px;width:1px;height:728px;background:#188038"></div>
<div class="a" style="left:422px;top:215px;width:373px;height:18px;border:2px solid #1a73e8"></div>
<div class="a" style="left:794px;top:232px;width:8px;height:8px;border-radius:50%;background:#0b57d0;border:1px solid #fff"></div>
</div>
<div class="a" style="left:0;top:755px;width:1409px;height:1px;background:#e1e1e1"></div>
<div class="a" style="left:0;top:756px;width:799px;height:12px;background:#f8f8f8"></div>
<div class="a" style="left:799px;top:756px;width:4px;height:12px;background:#dadfe8"></div>
<div class="a" style="left:804px;top:757px;width:425px;height:9px;border-radius:5px;background:#dadce0"></div>
<div class="a" style="left:0;top:768px;width:1409px;height:1px;background:#e4e6e9"></div>
<div class="a" style="left:0;top:769px;width:1409px;height:31px;background:#f9fbfd"></div>
<svg class="a" style="left:56px;top:782px" width="12" height="12" viewBox="0 0 12 12"><path d="M6 1v10M1 6h10" stroke="#444746" stroke-width="1.7" fill="none"/></svg>
<svg class="a" style="left:95px;top:782px" width="14" height="12" viewBox="0 0 14 12"><path d="M0 1.8h14M0 6h14M0 10.2h14" stroke="#444746" stroke-width="1.7" fill="none"/></svg>
<div class="a" style="left:134px;top:769px;width:198px;height:31px;background:#e1e9f7"></div>
<div class="tab" style="left:146px;color:#0b57d0;-webkit-text-stroke:0.35px #0b57d0;letter-spacing:0.845px;"><span id="t146">Семантическое ядро</span></div>
<div class="car" style="left:312px;border-top-color:#0b57d0"></div>
<div class="tab" style="left:344px;letter-spacing:0.547px;"><span id="t344">Сводная таблица</span></div>
<div class="car" style="left:480px;"></div>
<div class="tab" style="left:513px;letter-spacing:0.623px;"><span id="t513">Фильтры</span></div>
<div class="car" style="left:586px;"></div>
<div class="tab" style="left:620px;letter-spacing:0.623px;"><span id="t620">Экспорт в ТопВизор</span></div>
<div class="car" style="left:776px;"></div>
<div class="tab" style="left:809px;letter-spacing:0.534px;"><span id="t809">Структура для внедрения</span></div>
<div class="car" style="left:1004px;"></div>
</body></html>
